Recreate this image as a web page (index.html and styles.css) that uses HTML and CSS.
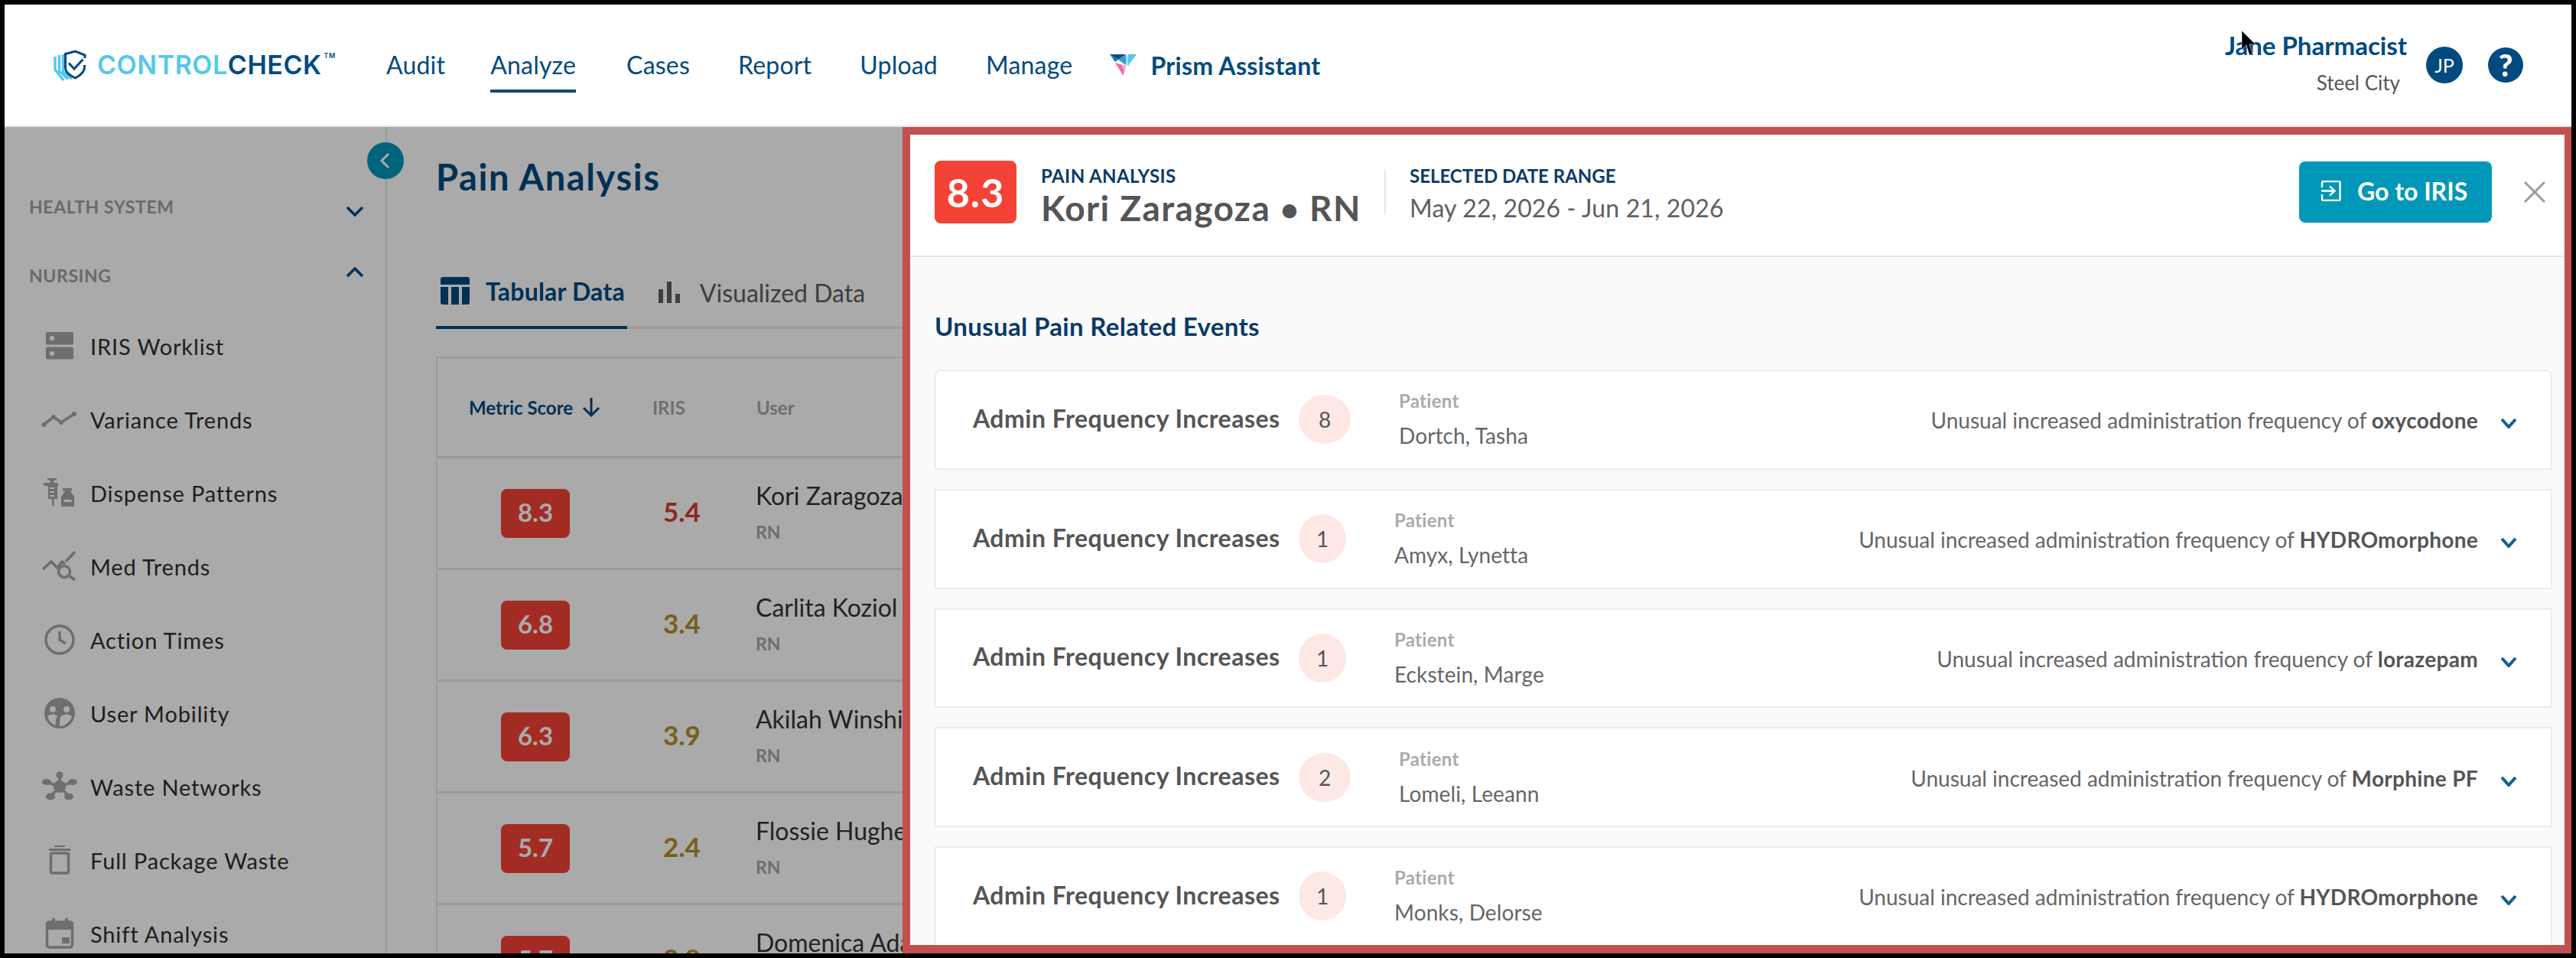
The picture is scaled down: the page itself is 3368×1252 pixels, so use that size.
FILE: index.html
```html
<!DOCTYPE html>
<html lang="en">
<head>
<meta charset="utf-8">
<title>ControlCheck - Pain Analysis</title>
<link rel="stylesheet" href="styles.css">
</head>
<body>
<div class="frame">
  <header class="topbar">
    <a class="logo">
      <svg class="logo-mark" viewBox="0 0 43 41" width="43" height="41">
        <g fill="none" stroke="#56c8ea" stroke-width="3.4">
          <path d="M2 9V26L13 40"/><path d="M7.5 7V28L19 38.5"/><path d="M12.5 6V29L24 38"/>
        </g>
        <path d="M41 11V7L28.5 2 15.5 5.5V24C15.5 30 22 34 28.5 37 34 34 40.5 30 40.5 23V20" fill="none" stroke="#004a80" stroke-width="3"/>
        <path d="M20 17.5 27 25 38.5 12.5" fill="none" stroke="#004a80" stroke-width="3"/>
      </svg>
      <span class="logo-word"><span class="logo-light">CONTROL</span><span class="logo-dark">CHECK</span><sup class="logo-tm">TM</sup></span>
    </a>
    <nav class="mainnav">
      <a>Audit</a><a class="is-active">Analyze</a><a>Cases</a><a>Report</a><a>Upload</a><a>Manage</a>
    </nav>
    <a class="prism">
      <svg viewBox="0 0 35 28" width="35" height="28">
        <polygon points="0,0 21,0 11,7" fill="#004a80"/>
        <polygon points="21,0 11,7 21,14" fill="#3b9cc9"/>
        <polygon points="0,0 11,7 7,10" fill="#1a78ad"/>
        <polygon points="24,0 35,0 24,15" fill="#56c8ea"/>
        <polygon points="21,1 24,1 24,15 21,14" fill="#a9dfee"/>
        <polygon points="7,11 21,15 17.500,28" fill="#ee6aa7"/>
        <polygon points="15,13 21,15 18,22" fill="#f5a8cb"/>
      </svg>
      <span>Prism Assistant</span>
    </a>
    <div class="account">
      <div class="account-text">
        <div class="account-name">Jane Pharmacist</div>
        <div class="account-site">Steel City</div>
      </div>
      <div class="avatar">JP</div>
      <div class="help">?</div>
    </div>
  </header>

  <div class="workspace">
    <aside class="sidebar">
      <div class="collapse-btn"><svg viewBox="0 0 48 48" width="48" height="48"><path d="M28 15 19 24 28 33" fill="none" stroke="#fff" stroke-width="3"/></svg></div>
      <div class="sec-head sec-first"><span>HEALTH SYSTEM</span><svg class="sec-chev" viewBox="0 0 24 14" width="24" height="14"><path d="M2 2 12 12 22 2" /></svg></div>
      <div class="sec-head sec-second"><span>NURSING</span><svg class="sec-chev up" viewBox="0 0 24 14" width="24" height="14"><path d="M2 12 12 2 22 12" /></svg></div>
      <ul class="side-list">
        <li><svg class="side-ico" viewBox="0 0 48 40"><rect x="6" y="2" width="36" height="16.500" rx="2"/><rect x="6" y="21.500" width="36" height="16" rx="2"/><circle cx="14" cy="10" r="3" class="cut"/><circle cx="14" cy="30" r="3" class="cut"/></svg>IRIS Worklist</li>
        <li><svg class="side-ico" viewBox="0 0 48 40"><path d="M3 27 16 17 26 24 43 13" class="line"/><circle cx="3.500" cy="27" r="3"/><circle cx="16" cy="17" r="3"/><circle cx="26" cy="24" r="3"/><circle cx="43" cy="13" r="3"/></svg>Variance Trends</li>
        <li><svg class="side-ico" viewBox="0 0 48 40"><path d="M8 1H20V3.500H16.500V7H22V11H21V28H16.500V38L14 36V28H9V11H3V7H11.500V3.500H8Z"/><path d="M11 13H17V15H11ZM11 18H17V20H11ZM11 23H17V25H11Z" class="cut"/><path d="M28 14H40V17L38 18 43 25V38H26V25L31 18 28 17Z"/><rect x="29.500" y="29" width="10" height="3" class="cut"/></svg>Dispense Patterns</li>
        <li><svg class="side-ico" viewBox="0 0 48 40"><path d="M2 24 13 14 21 22 27 14 31 17" class="line"/><path d="M32 14 44 1" class="line"/><circle cx="30" cy="27" r="7.500" class="ring"/><path d="M35.500 32 44 38" class="line"/></svg>Med Trends</li>
        <li><svg class="side-ico" viewBox="0 0 48 40"><circle cx="24" cy="20" r="18" class="ring"/><path d="M24 9V20L32 25" class="line"/></svg>Action Times</li>
        <li><svg class="side-ico" viewBox="0 0 48 40"><circle cx="24" cy="20" r="20"/><circle cx="15" cy="15" r="4" class="cut"/><circle cx="33" cy="15" r="4" class="cut"/><path d="M8 25C11 20 19 21 22 24 19 25 18 31 19 36 13 34 10 30 8 25ZM40 25C37 20 29 21 25 25 24 28 24 33 24 37 32 37 37 31 40 25Z" class="cut"/></svg>User Mobility</li>
        <li><svg class="side-ico" viewBox="0 0 48 40"><path d="M24 20 24 5M24 20 7 14M24 20 41 14M24 20 12 33M24 20 36 33" class="line"/><circle cx="24" cy="20" r="8"/><circle cx="24" cy="5" r="4.500"/><ellipse cx="7" cy="14" rx="6" ry="4"/><ellipse cx="41" cy="14" rx="6" ry="4"/><ellipse cx="12" cy="33" rx="6" ry="4.500"/><ellipse cx="36" cy="33" rx="6" ry="4.500"/></svg>Waste Networks</li>
        <li><svg class="side-ico" viewBox="0 0 48 40"><path d="M10 5H38V8H10Z" /><path d="M17 1H31V3H17Z"/><rect x="12.500" y="11" width="23" height="26" rx="2" class="ring"/></svg>Full Package Waste</li>
        <li><svg class="side-ico" viewBox="0 0 48 40"><rect x="7.500" y="5" width="33" height="33" rx="3" class="ring"/><rect x="6" y="5" width="36" height="10"/><rect x="14" y="0" width="4" height="6"/><rect x="31" y="0" width="4" height="6"/><rect x="27" y="25" width="10" height="8"/></svg>Shift Analysis</li>
      </ul>
    </aside>

    <main class="content">
      <h1 class="page-title">Pain Analysis</h1>
      <div class="tabs">
        <a class="tab is-active">
          <svg viewBox="0 0 38 36" width="38" height="36"><path d="M3 0H35A3 3 0 0 1 38 3V10H0V3A3 3 0 0 1 3 0Z"/><path d="M0 13H10V36H3A3 3 0 0 1 0 33Z"/><rect x="14" y="13" width="10" height="23"/><path d="M28 13H38V33A3 3 0 0 1 35 36H28Z"/></svg>
          Tabular Data
        </a>
        <a class="tab">
          <svg viewBox="0 0 28 28" width="28" height="28"><rect x="0" y="10" width="6" height="18"/><rect x="11" y="0" width="6" height="28"/><rect x="22" y="16" width="6" height="12"/></svg>
          Visualized Data
        </a>
      </div>
      <section class="table">
        <div class="t-row t-head">
          <div class="t-metric">Metric Score <svg viewBox="0 0 24 26" width="24" height="26"><path d="M12 1V24M2 14 12 24 22 14" fill="none" stroke="#004a80" stroke-width="3"/></svg></div>
          <div class="t-iris">IRIS</div>
          <div class="t-user">User</div>
        </div>
        <div class="t-row">
          <div class="t-score"><span class="score-box">8.3</span></div>
          <div class="t-val val-red">5.4</div>
          <div class="t-who"><div class="who-name">Kori Zaragoza</div><div class="who-role">RN</div></div>
        </div>
        <div class="t-row">
          <div class="t-score"><span class="score-box">6.8</span></div>
          <div class="t-val val-olive">3.4</div>
          <div class="t-who"><div class="who-name">Carlita Koziol</div><div class="who-role">RN</div></div>
        </div>
        <div class="t-row">
          <div class="t-score"><span class="score-box">6.3</span></div>
          <div class="t-val val-olive">3.9</div>
          <div class="t-who"><div class="who-name">Akilah Winship</div><div class="who-role">RN</div></div>
        </div>
        <div class="t-row">
          <div class="t-score"><span class="score-box">5.7</span></div>
          <div class="t-val val-olive">2.4</div>
          <div class="t-who"><div class="who-name">Flossie Hughes</div><div class="who-role">RN</div></div>
        </div>
        <div class="t-row">
          <div class="t-score"><span class="score-box">5.7</span></div>
          <div class="t-val val-olive">2.8</div>
          <div class="t-who"><div class="who-name">Domenica Adams</div><div class="who-role">RN</div></div>
        </div>
      </section>
    </main>

    <div class="scrim"></div>

    <section class="drawer">
      <div class="drawer-head">
        <div class="drawer-score">8.3</div>
        <div class="drawer-who">
          <div class="eyebrow eyebrow-wide">PAIN ANALYSIS</div>
          <div class="drawer-name">Kori Zaragoza <span class="dot">•</span> RN</div>
        </div>
        <div class="drawer-rule"></div>
        <div class="drawer-date">
          <div class="eyebrow">SELECTED DATE RANGE</div>
          <div class="date-val">May 22, 2026 - Jun 21, 2026</div>
        </div>
        <a class="iris-btn">
          <svg viewBox="0 0 27 27" width="27" height="27"><path d="M2 9V2.500A1.500 1.500 0 0 1 3.500 1H24A1.500 1.500 0 0 1 25.500 2.500V24.500A1.500 1.500 0 0 1 24 26H3.500A1.500 1.500 0 0 1 2 24.500V18" fill="none" stroke="#fff" stroke-width="2.400"/><path d="M1 13.500H18M12 7.500 18.500 13.500 12 19.500" fill="none" stroke="#fff" stroke-width="2.400"/></svg>
          Go to IRIS
        </a>
        <svg class="drawer-close" viewBox="0 0 28 28" width="28" height="28"><path d="M1 1 27 27M27 1 1 27" fill="none" stroke="#9c9c9c" stroke-width="3"/></svg>
      </div>
      <div class="drawer-body">
        <h2 class="events-title">Unusual Pain Related Events</h2>
        <div class="events">
          <article class="event event-first">
            <div class="event-title">Admin Frequency Increases</div>
            <div class="count count-wide">8</div>
            <div class="patient"><div class="patient-label">Patient</div><div class="patient-name">Dortch, Tasha</div></div>
            <div class="event-desc">Unusual increased administration frequency of <b>oxycodone</b></div>
            <svg class="event-chev" viewBox="0 0 22 14" width="22" height="14"><path d="M2 2 11 12 20 2"/></svg>
          </article>
          <article class="event">
            <div class="event-title">Admin Frequency Increases</div>
            <div class="count">1</div>
            <div class="patient"><div class="patient-label">Patient</div><div class="patient-name">Amyx, Lynetta</div></div>
            <div class="event-desc">Unusual increased administration frequency of <b>HYDROmorphone</b></div>
            <svg class="event-chev" viewBox="0 0 22 14" width="22" height="14"><path d="M2 2 11 12 20 2"/></svg>
          </article>
          <article class="event">
            <div class="event-title">Admin Frequency Increases</div>
            <div class="count">1</div>
            <div class="patient"><div class="patient-label">Patient</div><div class="patient-name">Eckstein, Marge</div></div>
            <div class="event-desc">Unusual increased administration frequency of <b>lorazepam</b></div>
            <svg class="event-chev" viewBox="0 0 22 14" width="22" height="14"><path d="M2 2 11 12 20 2"/></svg>
          </article>
          <article class="event">
            <div class="event-title">Admin Frequency Increases</div>
            <div class="count count-wide">2</div>
            <div class="patient"><div class="patient-label">Patient</div><div class="patient-name">Lomeli, Leeann</div></div>
            <div class="event-desc">Unusual increased administration frequency of <b>Morphine PF</b></div>
            <svg class="event-chev" viewBox="0 0 22 14" width="22" height="14"><path d="M2 2 11 12 20 2"/></svg>
          </article>
          <article class="event">
            <div class="event-title">Admin Frequency Increases</div>
            <div class="count">1</div>
            <div class="patient"><div class="patient-label">Patient</div><div class="patient-name">Monks, Delorse</div></div>
            <div class="event-desc">Unusual increased administration frequency of <b>HYDROmorphone</b></div>
            <svg class="event-chev" viewBox="0 0 22 14" width="22" height="14"><path d="M2 2 11 12 20 2"/></svg>
          </article>
        </div>
      </div>
    </section>
  </div>
  <svg class="cursor" viewBox="0 0 20 34" width="20" height="34"><path d="M1 0V25L7 19 11 32 15 30 11 18H19Z" fill="#000" stroke="#fff" stroke-width="0.500"/></svg>
</div>
</body>
</html>
```
FILE: styles.css
```css
* { box-sizing: border-box; }
html, body { margin: 0; padding: 0; height: 100%; }
body { background: #000; font-family: "Lato", "Liberation Sans", sans-serif; color: #333; }
.frame { width: 3368px; height: 1252px; border: 6px solid #000; display: flex; flex-direction: column; background: #fff; overflow: hidden; position: relative; }
a { color: inherit; text-decoration: none; }
.cursor { position: absolute; left: 2924px; top: 34px; }

/* top bar */
.topbar { height: 160px; flex: none; display: flex; align-items: center; background: #fff; border-bottom: 2px solid #e4e4e4; padding-left: 64px; position: relative; }
.logo { display: flex; align-items: center; width: 376px; flex: none; }
.logo-word { margin-left: 14px; font-family: "Inter", sans-serif; font-size: 34px; font-weight: 600; letter-spacing: 0.55px; line-height: 40px; display: flex; }
.logo-light { color: #56c8ea; }
.logo-dark { color: #004a80; }
.logo-tm { font-size: 9px; line-height: 12px; margin: 2px 0 0 3px; color: #004a80; }
.mainnav { display: flex; gap: 63px; margin-left: 59px; font-size: 32px; letter-spacing: 0.2px; color: #004a80; }
.mainnav a { position: relative; line-height: 40px; }
.mainnav .is-active { margin: 0 3px 0 -4px; }
.mainnav .is-active::after { content: ""; position: absolute; left: 0; right: 0; top: 52px; height: 4px; background: #004a80; }
.prism { display: flex; align-items: center; gap: 18px; margin-left: 49px; font-size: 32px; letter-spacing: 0.3px; font-weight: 700; color: #004a80; }
.account { margin-left: auto; display: flex; align-items: center; padding-right: 63px; }
.account-text { text-align: right; padding-right: 25px; }
.account-name { font-size: 33px; font-weight: 700; color: #004a80; line-height: 40px; margin-top: -6px; }
.account-site { font-size: 26px; color: #555; line-height: 34px; margin-top: 12px; padding-right: 9px; }
.avatar { width: 48px; height: 48px; border-radius: 50%; background: #004a80; color: #fff; font-size: 25px; display: flex; align-items: center; justify-content: center; }
.help { width: 46px; height: 46px; margin-left: 33px; border-radius: 50%; background: #004a80; color: #fff; font-size: 40px; font-weight: 900; display: flex; align-items: center; justify-content: center; }

/* workspace */
.workspace { flex: 1; min-height: 0; display: flex; position: relative; overflow: hidden; }
.scrim { position: absolute; inset: 0; background: rgba(0, 0, 0, 0.333); }

/* sidebar */
.sidebar { width: 500px; flex: none; background: #fff; border-right: 2px solid #e2e2e2; padding-top: 86px; position: relative; }
.collapse-btn { position: absolute; left: 474px; top: 20px; width: 48px; height: 48px; border-radius: 50%; background: #0097b8; display: flex; }
.sec-head { display: flex; justify-content: space-between; align-items: center; height: 36px; padding: 0 28px 0 32px; font-size: 23px; font-weight: 700; letter-spacing: 0.6px; color: #9f9f9f; }
.sec-second { margin-top: 54px; }
.sec-chev { fill: none; stroke: #004a80; stroke-width: 3.500; position: relative; top: 6px; }
.sec-chev.up { top: -4px; }
.side-list { list-style: none; margin: 26px 0 0; padding: 0 0 0 48px; }
.side-list li { height: 96px; display: flex; align-items: center; gap: 16px; font-size: 29px; letter-spacing: 0.85px; color: #2e2e2e; }
.side-ico { width: 48px; height: 40px; flex: none; fill: #a6a6a6; }
.side-ico .cut { fill: #fff; }
.side-ico .line { fill: none; stroke: #a6a6a6; stroke-width: 3.500; }
.side-ico .ring { fill: none; stroke: #a6a6a6; stroke-width: 3.500; }

/* main */
.content { flex: 1; min-width: 0; background: #fff; padding: 37px 40px 0 64px; }
.page-title { margin: 0; font-size: 47px; letter-spacing: 1.6px; font-weight: 700; line-height: 56px; color: #004a80; }
.tabs { display: flex; gap: 41px; height: 80px; margin-top: 91px; padding-bottom: 12px; border-bottom: 4px solid #ececec; }
.tab { display: flex; align-items: center; gap: 26px; font-size: 32px; color: #5e5e5e; fill: #5e5e5e; height: 64px; }
.tab.is-active { font-weight: 700; letter-spacing: 0.2px; color: #004a80; fill: #004a80; gap: 21px; padding: 0 3px 16px 6px; height: 80px; border-bottom: 4px solid #004a80; }
.table { margin-top: 36px; border: 2px solid #e6e6e6; border-bottom: 0; background: #fff; }
.t-row { display: grid; grid-template-columns: 281px 136px 1fr; align-items: center; height: 146px; border-bottom: 3px solid #e6e6e6; }
.t-head { height: 131px; font-size: 24px; font-weight: 700; color: #a9a9a9; }
.t-metric { padding-left: 41px; display: flex; align-items: center; gap: 12px; color: #004a80; }
.t-score { padding-left: 83px; }
.score-box { display: flex; width: 90px; height: 64px; padding-bottom: 3px; border-radius: 8px; background: #f44336; color: #fff; font-size: 33px; font-weight: 700; align-items: center; justify-content: center; }
.t-val { padding: 0 0 5px 14px; font-size: 35px; font-weight: 700; }
.val-red { color: #d33c2d; }
.val-olive { color: #b09028; }
.t-who { margin: -4px 0 0 -1px; }
.who-name { font-size: 32px; line-height: 40px; color: #333; white-space: nowrap; }
.who-role { font-size: 23px; line-height: 30px; margin-top: 12px; font-weight: 700; color: #a6a6a6; }

/* drawer */
.drawer { position: absolute; left: 1174px; top: 0; right: 0; bottom: 0; border: solid #c25050; border-width: 10px 9px 11px 10px; background: #fafafa; overflow: hidden; }
.drawer-head { height: 160px; display: flex; align-items: flex-start; padding: 34px 25px 0 32px; background: #fff; border-bottom: 2px solid #e6e6e6; }
.drawer-score { width: 107px; height: 82px; flex: none; border-radius: 8px; background: #f44336; color: #fff; font-size: 52px; letter-spacing: 1px; font-weight: 700; display: flex; align-items: center; justify-content: center; }
.drawer-who { width: 449px; flex: none; margin: 5px 0 0 32px; }
.eyebrow { font-size: 24px; font-weight: 700; line-height: 30px; color: #0a3a68; }
.eyebrow-wide { letter-spacing: 0.4px; }
.drawer-name { font-size: 46px; letter-spacing: 1.4px; font-weight: 700; line-height: 54px; color: #555; white-space: nowrap; }
.dot { font-size: 42px; }
.drawer-rule { width: 2px; height: 60px; flex: none; margin: 11px 0 0; background: #e6e6e6; }
.drawer-date { margin: 5px 0 0 31px; }
.date-val { font-size: 32px; letter-spacing: 0.15px; line-height: 54px; color: #606060; }
.iris-btn { margin: 1px 0 0 auto; width: 252px; height: 80px; padding: 0 0 3px 28px; border-radius: 8px; background: #0097b8; color: #fff; font-size: 32px; font-weight: 700; display: flex; align-items: center; gap: 21px; }
.drawer-close { margin: 27px 0 0 42px; flex: none; }
.drawer-body { padding: 70px 16px 0 32px; }
.events-title { margin: 0 0 37px; font-size: 33px; letter-spacing: 0.33px; font-weight: 700; line-height: 40px; color: #0a3a68; }
.events { display: flex; flex-direction: column; gap: 25px; }
.event { height: 130.750px; background: #fff; border: 2px solid #ececec; display: flex; align-items: center; padding: 0 44px 0 48px; }
.event-first { border-radius: 8px 8px 0 0; }
.event-title { width: 401px; flex: none; margin-top: -4px; font-size: 32px; letter-spacing: 0.48px; font-weight: 700; color: #555; white-space: nowrap; }
.count { width: 62px; height: 64px; margin-left: 25px; flex: none; border-radius: 50%; background: #fde8e6; color: #555; font-size: 28px; display: flex; align-items: center; justify-content: center; }
.count-wide { width: 68px; }
.patient { margin-left: 63px; padding-top: 2px; }
.patient-label { font-size: 24px; letter-spacing: 0.3px; font-weight: 700; line-height: 30px; color: #aaa; }
.patient-name { font-size: 28px; letter-spacing: 0.1px; line-height: 40px; margin-top: 10px; color: #666; }
.event-desc { margin-left: auto; font-size: 28px; line-height: 36px; color: #666; position: relative; top: 1px; white-space: nowrap; }
.event-desc b { color: #555; font-weight: 700; letter-spacing: 0.3px; }
.event-chev { margin: 10px 0 0 29px; flex: none; fill: none; stroke: #14608f; stroke-width: 4; }
```
